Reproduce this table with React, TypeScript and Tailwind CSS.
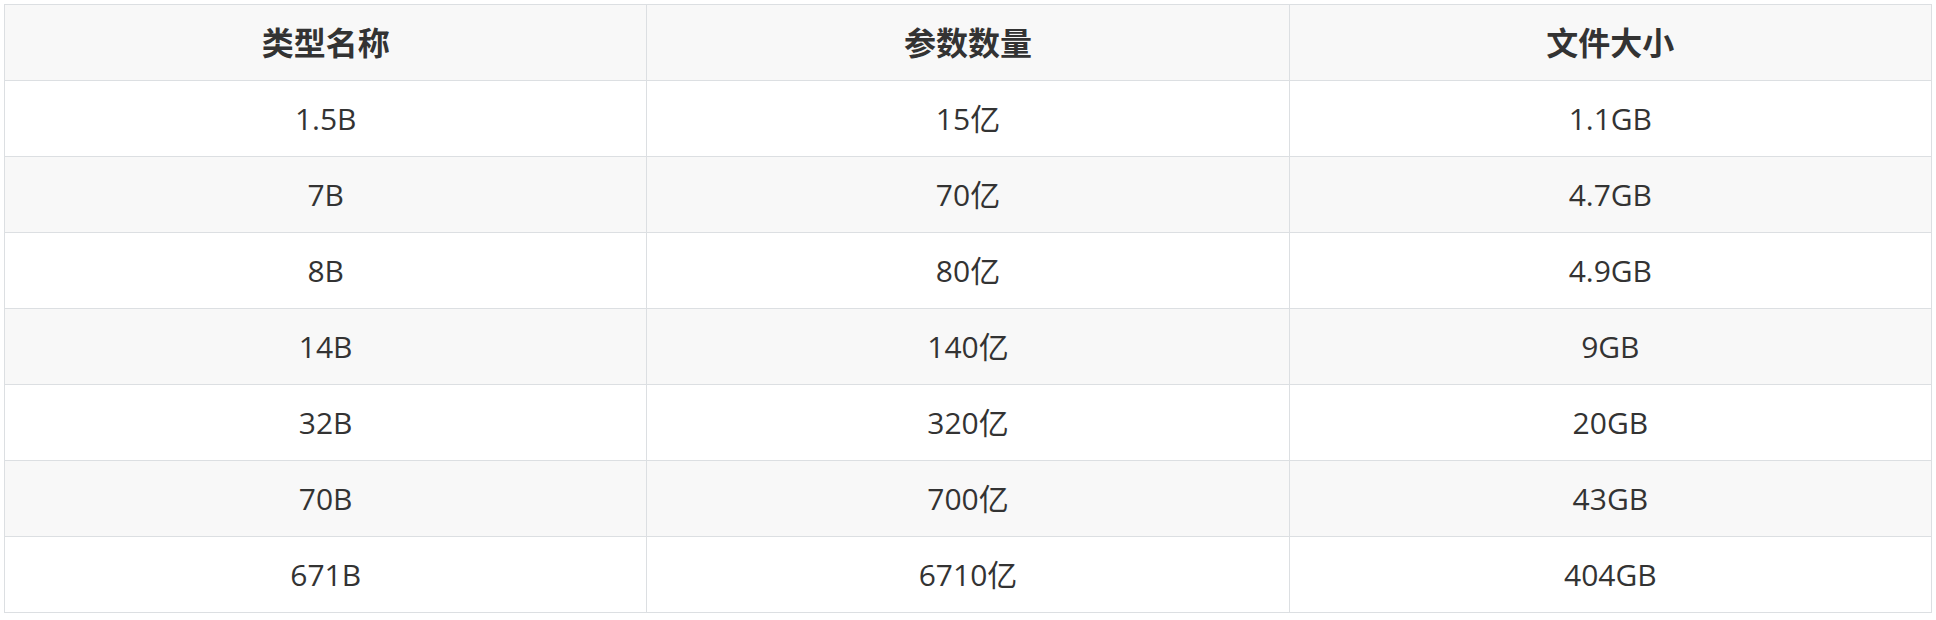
const rows: [string, string, string][] = [
  ["1.5B", "15亿", "1.1GB"],
  ["7B", "70亿", "4.7GB"],
  ["8B", "80亿", "4.9GB"],
  ["14B", "140亿", "9GB"],
  ["32B", "320亿", "20GB"],
  ["70B", "700亿", "43GB"],
  ["671B", "6710亿", "404GB"],
];

export default function App() {
  return (
    <div
      className="min-h-screen bg-white p-[4px] text-[#333333]"
      style={{ fontFamily: '"Open Sans", "Noto Sans CJK SC", sans-serif' }}
    >
      <table className="w-full table-fixed border-collapse text-[30px]">
        <thead>
          <tr className="bg-[#f8f8f8]">
            <th className="h-[76px] border border-[#dcdfe2] text-[32px] font-bold">类型名称</th>
            <th className="h-[76px] border border-[#dcdfe2] text-[32px] font-bold">参数数量</th>
            <th className="h-[76px] border border-[#dcdfe2] text-[32px] font-bold">文件大小</th>
          </tr>
        </thead>
        <tbody>
          {rows.map((row, i) => (
            <tr key={row[0]} className={i % 2 === 1 ? "bg-[#f8f8f8]" : "bg-white"}>
              {row.map((cell, j) => (
                <td key={j} className="h-[76px] border border-[#dcdfe2] text-center">
                  {cell}
                </td>
              ))}
            </tr>
          ))}
        </tbody>
      </table>
    </div>
  );
}
